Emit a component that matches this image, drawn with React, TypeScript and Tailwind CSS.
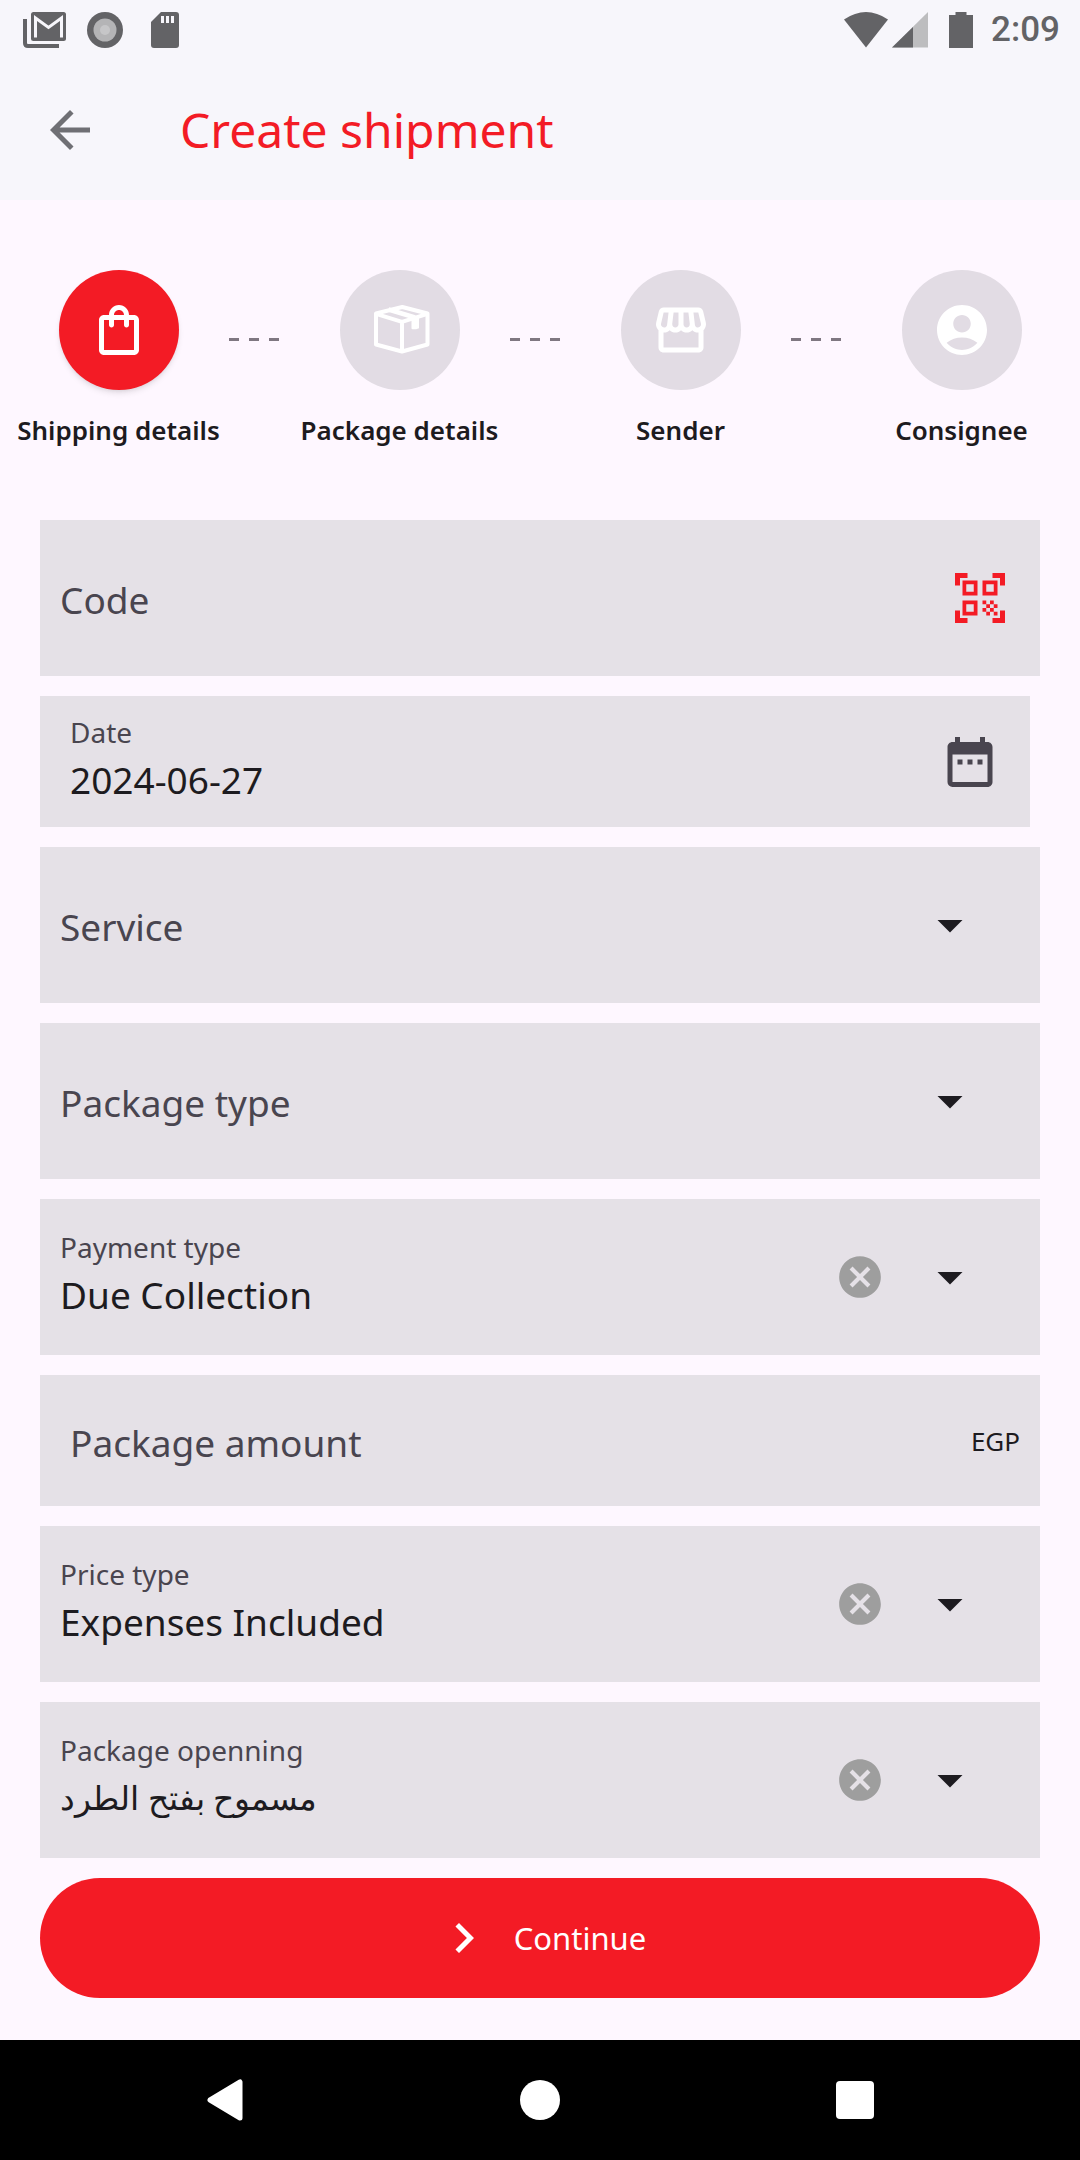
import { ReactNode } from 'react'
import {
  MdAccountCircle,
  MdArrowBack,
  MdArrowDropDown,
  MdCancel,
  MdChevronRight,
  MdDateRange,
  MdOutlineShoppingBag,
  MdOutlineStorefront,
  MdQrCodeScanner,
} from 'react-icons/md'

function BoxIcon() {
  return (
    <svg viewBox="-2 1 72 66" className="h-[66px] w-[72px]" aria-hidden="true">
      <g fill="none" stroke="currentColor" strokeWidth="4" strokeLinejoin="round">
        <path d="M36.3 11 61.5 17.5V48.5L36 55.5 10 48.5V17.5Z" />
        <path d="M10 17.8 36 25.8 61.5 17.8M36 25.8V55" />
        <path d="M22.5 13.5 49 21.5" strokeWidth="4.5" />
      </g>
      <path d="M45.5 21h7.5v11.2l-2.8 1h-3.7q-1 0-1-1z" fill="currentColor" />
    </svg>
  )
}

function StatusBar() {
  return (
    <div className="flex h-[60px] items-center justify-between pl-[23px] pr-5 text-[#636366]">
      <div className="flex items-center gap-5">
        <svg viewBox="0 0 44 36" className="h-9 w-11" aria-label="Gmail">
          <path d="M2 7v24q0 3 3 3h31" fill="none" stroke="currentColor" strokeWidth="4" />
          <rect x="8" width="35" height="29" rx="2.5" fill="currentColor" />
          <path
            d="M12.5 25.5V6L25.5 15.5 38.5 6V25.5"
            fill="none"
            stroke="#f7f6fb"
            strokeWidth="3"
          />
        </svg>
        <svg viewBox="0 0 36 36" className="h-9 w-9" aria-hidden="true">
          <circle cx="18" cy="18" r="18" fill="currentColor" />
          <circle cx="18" cy="18" r="11.5" fill="#b4b4b6" />
          <circle cx="18" cy="18" r="5" fill="#c6c6c8" />
        </svg>
        <svg viewBox="0 0 44 36" className="h-9 w-11" aria-hidden="true">
          <path d="M18 0h15q3 0 3 3v30q0 3-3 3H11q-3 0-3-3V10z" fill="currentColor" />
          <path d="M18 4h3v7h-3zM23 4h3v7h-3zM28 4h3v7h-3z" fill="#f7f6fb" />
        </svg>
      </div>
      <div className="flex items-center">
        <svg viewBox="0 0 44 36" className="h-9 w-11" aria-hidden="true">
          <path d="M0 7.5Q22-7.5 44 7.5L22 35.5z" fill="currentColor" />
        </svg>
        <svg viewBox="0 0 36 36" className="ml-1 h-9 w-9" aria-hidden="true">
          <path d="M36 0V35.5H0z" fill="#bdbdbf" />
          <path d="M21 15V35.5H0z" fill="currentColor" />
        </svg>
        <svg viewBox="0 0 24 36" className="ml-[21px] h-9 w-6" aria-hidden="true">
          <path d="M6.5 0h11v3H24v33H0V3h6.5z" fill="currentColor" />
        </svg>
        <span className="ml-[18px] font-['Roboto',sans-serif] text-[35px] font-medium leading-10">
          2:09
        </span>
      </div>
    </div>
  )
}

const steps = [
  { title: 'Shipping details', icon: <MdOutlineShoppingBag size={60} /> },
  { title: 'Package details', icon: <BoxIcon /> },
  { title: 'Sender', icon: <MdOutlineStorefront size={60} /> },
  { title: 'Consignee', icon: <MdAccountCircle size={60} /> },
]

function Dashes() {
  return (
    <li aria-hidden="true" className="mt-[68px] flex w-[60px] shrink-0 gap-2.5">
      <span className="h-[3px] w-2.5 bg-[#7f7781]" />
      <span className="h-[3px] w-2.5 bg-[#7f7781]" />
      <span className="h-[3px] w-2.5 bg-[#7f7781]" />
    </li>
  )
}

function Step({ title, icon, active }: { title: string; icon: ReactNode; active: boolean }) {
  return (
    <li className="flex min-w-0 flex-1 flex-col items-center gap-5">
      <button
        type="button"
        aria-label={title}
        className={
          active
            ? 'flex h-[120px] w-[120px] items-center justify-center rounded-full bg-[#f31b25] text-white shadow-md'
            : 'flex h-[120px] w-[120px] items-center justify-center rounded-full bg-[#e2dce4] text-white'
        }
      >
        {icon}
      </button>
      <span className="whitespace-nowrap text-[26px] font-semibold leading-10">{title}</span>
    </li>
  )
}

// Text box whose label sits inside it while it is empty
function EmptyInput({ id, label }: { id: string; label: string }) {
  return (
    <div className="relative min-w-0 flex-1">
      <input id={id} placeholder=" " className="peer h-14 w-full text-[37px] outline-none" />
      <label
        htmlFor={id}
        className="absolute inset-0 hidden items-center pt-1 text-[37px] leading-[52px] text-[#49454f] peer-placeholder-shown:flex"
      >
        {label}
      </label>
    </div>
  )
}

interface SelectFieldProps {
  id: string
  label: string
  value?: string
  arabic?: boolean
}

function SelectField({ id, label, value, arabic }: SelectFieldProps) {
  return (
    <div className="flex min-h-[156px] items-center bg-[#e5e1e7] pl-5 pr-[60px]">
      {value ? (
        <div className="flex min-w-0 flex-1 flex-col pb-1">
          <label htmlFor={id} className="text-[28px] leading-10 text-[#49454f]">
            {label}
          </label>
          <select
            id={id}
            className={
              arabic
                ? 'h-14 w-full appearance-none text-[33px] outline-none'
                : 'h-14 w-full appearance-none text-[37px] outline-none'
            }
          >
            <option>{value}</option>
          </select>
        </div>
      ) : (
        <div className="relative min-w-0 flex-1">
          <select
            id={id}
            required
            className="peer h-14 w-full appearance-none text-[37px] outline-none"
          >
            <option value=""></option>
          </select>
          <label
            htmlFor={id}
            className="pointer-events-none absolute inset-0 flex items-center pt-1 text-[37px] leading-[52px] text-[#49454f] peer-valid:hidden"
          >
            {label}
          </label>
        </div>
      )}
      {value && (
        <button type="button" aria-label={`Clear ${label}`} className="mr-[35px] text-[#9e9e9e]">
          <MdCancel size={50} />
        </button>
      )}
      <MdArrowDropDown size={60} className="shrink-0" />
    </div>
  )
}

export default function App() {
  return (
    <div className="flex min-h-screen flex-col bg-[#fef7ff] font-['Noto_Sans',sans-serif] text-[#1d1b20]">
      <header className="bg-[#f7f6fb]">
        <StatusBar />
        <div className="flex h-[140px] items-center gap-20 px-10">
          <button type="button" aria-label="Back" className="text-[#6f6f74]">
            <MdArrowBack size={60} />
          </button>
          <h1 className="text-[48px] leading-[60px] text-[#f31b25]">Create shipment</h1>
        </div>
      </header>

      <main className="flex flex-1 flex-col">
        <ol className="flex px-2 py-[70px]">
          {steps.map((step, i) => [
            i > 0 && <Dashes key={'dashes-' + i} />,
            <Step key={step.title} title={step.title} icon={step.icon} active={i === 0} />,
          ])}
        </ol>

        <form className="flex flex-col gap-5 px-10 pb-[42px]">
          <div className="flex min-h-[156px] items-center bg-[#e5e1e7] pl-5 pr-[30px]">
            <EmptyInput id="code" label="Code" />
            <button type="button" aria-label="Scan code" className="text-[#f31b25]">
              <MdQrCodeScanner size={60} />
            </button>
          </div>

          <div className="mr-2.5 flex min-h-[131px] items-center bg-[#e5e1e7] px-[30px]">
            <div className="flex min-w-0 flex-1 flex-col pb-1">
              <label htmlFor="date" className="text-[28px] leading-10 text-[#49454f]">
                Date
              </label>
              <input
                id="date"
                defaultValue="2024-06-27"
                className="h-14 w-full text-[37px] outline-none"
              />
            </div>
            <button type="button" aria-label="Pick a date" className="text-[#49454f]">
              <MdDateRange size={60} />
            </button>
          </div>

          <SelectField id="service" label="Service" />
          <SelectField id="package-type" label="Package type" />
          <SelectField id="payment-type" label="Payment type" value="Due Collection" />

          <div className="flex min-h-[131px] items-center bg-[#e5e1e7] pl-[30px] pr-5">
            <EmptyInput id="amount" label="Package amount" />
            <span className="text-[26px] leading-10">EGP</span>
          </div>

          <SelectField id="price-type" label="Price type" value="Expenses Included" />
          <SelectField id="opening" label="Package openning" value="مسموح بفتح الطرد" arabic />

          <button
            type="submit"
            className="flex h-[120px] items-center justify-center gap-5 rounded-full bg-[#f31b25] text-[31px] text-white"
          >
            <MdChevronRight size={60} />
            Continue
          </button>
        </form>
      </main>

      <nav className="flex h-[120px] items-center justify-center bg-black text-white">
        <button type="button" aria-label="Back" className="flex w-[315px] justify-center">
          <svg viewBox="0 0 36 42" className="h-[42px] w-9">
            <path
              d="M33 3v36L3 21z"
              fill="currentColor"
              stroke="currentColor"
              strokeWidth="5"
              strokeLinejoin="round"
            />
          </svg>
        </button>
        <button type="button" aria-label="Home" className="flex w-[315px] justify-center">
          <span className="h-10 w-10 rounded-full bg-white" />
        </button>
        <button type="button" aria-label="Recent apps" className="flex w-[315px] justify-center">
          <span className="h-[38px] w-[38px] rounded bg-white" />
        </button>
      </nav>
    </div>
  )
}
